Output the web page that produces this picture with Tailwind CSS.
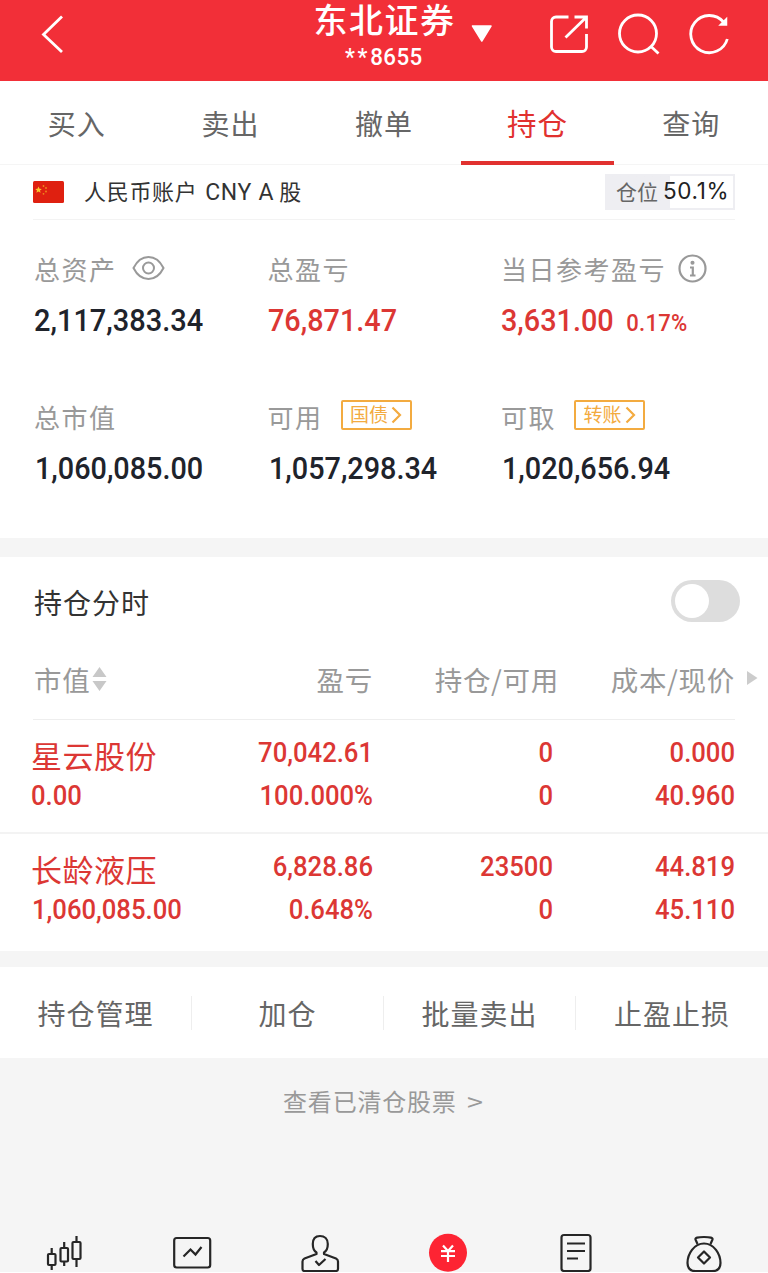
<!DOCTYPE html>
<html lang="zh-CN">
<head>
    <meta charset="UTF-8">
    <meta name="viewport" content="width=device-width, initial-scale=1.0">
    <title>东北证券 - 持仓</title>
    <script src="https://cdn.jsdelivr.net/npm/@tailwindcss/browser@4"></script>
</head>
<body class="bg-[#f5f5f5] font-['Noto_Sans_CJK_SC',sans-serif] whitespace-nowrap">
<div class="w-[768px] h-[1273px] flex flex-col overflow-hidden">

    <!-- 顶部栏 -->
    <header class="relative h-[81px] shrink-0 bg-[#f22f38] text-white">
        <div class="flex flex-col items-center">
            <h1 class="h-10 text-[34px] leading-[43px] font-['Roboto','Noto_Sans_CJK_SC',sans-serif] font-medium tracking-[1.5px] ml-[1px]">东北证券</h1>
            <p class="h-8 leading-[34px] text-[24px] font-['Roboto',sans-serif] font-medium tracking-[.4px] scale-x-[.93]"><span class="tracking-[3px]">**</span>8655</p>
        </div>
        <svg class="absolute inset-0" width="768" height="81" viewBox="0 0 768 81" fill="none" stroke="#fff" stroke-width="2.800">
            <path d="M62 16.500L43.500 34.500L62 52"/>
            <path d="M472.500 26H491L481.800 41Z" fill="#fff" stroke-width="1.500" stroke-linejoin="round"/>
            <path d="M568.500 17H556a4.500 4.500 0 0 0-4.500 4.500V47a4.500 4.500 0 0 0 4.500 4.500H582a4.500 4.500 0 0 0 4.500-4.500V34M574.500 17H586.500V28.500M586 17.500L565.500 37.500"/>
            <circle cx="638" cy="33.500" r="18.500"/>
            <path d="M651 46.500L658.500 53.500"/>
            <path d="M727.300 39A18.600 18.600 0 1 1 723.500 22"/>
            <path d="M726.500 18.500V25H720Z" fill="#fff" stroke-width="1.500"/>
        </svg>
    </header>

    <!-- 交易标签 -->
    <nav class="h-[84px] shrink-0 grid grid-cols-5 bg-white border-b border-[#f5f5f5] text-center text-[28px] leading-[84px] tracking-[1px] text-[#666]">
        <a>买入</a>
        <a>卖出</a>
        <a>撤单</a>
        <a class="h-[84px] border-b-4 border-[#e1312f] text-[#e1312f] text-[29.5px] leading-[82px]">持仓</a>
        <a>查询</a>
    </nav>

    <!-- 账户资产 -->
    <section class="h-[373px] shrink-0 bg-white px-[33px]">
        <div class="h-[55px] flex items-center border-b border-[#f3f3f3]">
            <svg width="31" height="22" viewBox="0 0 31 22">
                <rect width="31" height="22" rx="1.500" fill="#df2010"/>
                <path d="M5.500 5.500l1 2.200 2.300.2-1.800 1.600.6 2.300-2.100-1.200-2.100 1.200.6-2.300-1.800-1.600 2.300-.2z" fill="#fbc42d"/>
                <g fill="#ee8b1d"><circle cx="10.500" cy="5" r=".9"/><circle cx="13" cy="7" r=".9"/><circle cx="13" cy="10.500" r=".9"/><circle cx="10.500" cy="12.800" r=".9"/></g>
            </svg>
            <span class="ml-[20px] mt-[1px] text-[22px] tracking-[.7px] text-[#333]">人民币账户 <span class="ml-[2px] font-['Roboto',sans-serif] text-[23px]">CNY A</span><span class="ml-[5px]">股</span></span>
            <div class="ml-auto h-[36px] w-[130px] flex items-center border-2 border-[#eeeef2] bg-linear-to-r from-[#eeeef2] from-50% to-white to-50% pl-[9px] text-[21px] text-[#666]">
                仓位<span class="ml-[5px] mb-[2px] font-['Inter',sans-serif] text-[22.5px] tracking-[.6px] text-[#222]">50.1%</span>
            </div>
        </div>
        <div class="grid grid-cols-[233.5px_233.5px_1fr] pl-[1px] text-[#999] text-[26px] tracking-[1.5px]">
            <div class="h-[148px] pt-[28px]">
                <div class="h-10 flex items-center">总资产
                    <svg class="ml-[15px]" width="33" height="26" viewBox="0 0 33 26" fill="none" stroke="#999" stroke-width="2">
                        <path d="M1.500 13C5 6 10.500 2 16.500 2S28 6 31.500 13C28 20 22.500 24 16.500 24S5 20 1.500 13Z"/>
                        <circle cx="16.500" cy="13" r="5.500"/>
                    </svg>
                </div>
                <div class="mt-[12px] h-10 leading-10 font-['Roboto',sans-serif] font-medium text-[32px] tracking-normal text-[#20232b] origin-left scale-x-[.905]">2,117,383.34</div>
            </div>
            <div class="h-[148px] pt-[28px]">
                <div class="h-10 flex items-center">总盈亏</div>
                <div class="mt-[12px] h-10 leading-10 font-['Roboto',sans-serif] font-medium text-[32px] tracking-normal text-[#dc3734] origin-left scale-x-[.9]">76,871.47</div>
            </div>
            <div class="h-[148px] pt-[28px]">
                <div class="h-10 flex items-center">当日参考盈亏
                    <svg class="ml-[12px]" width="29" height="29" viewBox="0 0 29 29" fill="none" stroke="#999" stroke-width="2.200">
                        <circle cx="14.500" cy="14.500" r="13"/>
                        <circle cx="14.500" cy="8.800" r="1.300" fill="#999" stroke-width="1.500"/>
                        <path d="M12 13.500H14.800V21.500M12 21.500H17.500"/>
                    </svg>
                </div>
                <div class="mt-[12px] h-10 leading-10 font-['Roboto',sans-serif] font-medium text-[32px] tracking-normal text-[#dc3734] origin-left scale-x-[.9]">3,631.00<span class="ml-[14px] text-[24.500px] tracking-[.3px]">0.17%</span></div>
            </div>
            <div class="pt-[28px]">
                <div class="h-10 flex items-center">总市值</div>
                <div class="mt-[12px] ml-[1px] h-10 leading-10 font-['Roboto',sans-serif] font-medium text-[32px] tracking-normal text-[#20232b] origin-left scale-x-[.9]">1,060,085.00</div>
            </div>
            <div class="pt-[28px]">
                <div class="h-10 flex items-center">可用
                    <span class="ml-[18px] mb-[3px] h-[30px] w-[71px] flex items-center justify-center border-2 border-[#f3ab40] rounded-[2px] text-[19px] tracking-normal text-[#f3ab40]">国债<svg class="ml-[3px]" width="11" height="18" viewBox="0 0 11 18" fill="none" stroke="#f3ab40" stroke-width="2.200"><path d="M1.500 1.500L9 9L1.500 16.500"/></svg></span>
                </div>
                <div class="mt-[12px] ml-[1px] h-10 leading-10 font-['Roboto',sans-serif] font-medium text-[32px] tracking-normal text-[#20232b] origin-left scale-x-[.9]">1,057,298.34</div>
            </div>
            <div class="pt-[28px]">
                <div class="h-10 flex items-center">可取
                    <span class="ml-[18px] mb-[3px] h-[30px] w-[71px] flex items-center justify-center border-2 border-[#f3ab40] rounded-[2px] text-[19px] tracking-normal text-[#f3ab40]">转账<svg class="ml-[3px]" width="11" height="18" viewBox="0 0 11 18" fill="none" stroke="#f3ab40" stroke-width="2.200"><path d="M1.500 1.500L9 9L1.500 16.500"/></svg></span>
                </div>
                <div class="mt-[12px] ml-[1px] h-10 leading-10 font-['Roboto',sans-serif] font-medium text-[32px] tracking-normal text-[#20232b] origin-left scale-x-[.9]">1,020,656.94</div>
            </div>
        </div>
    </section>

    <!-- 持仓列表 -->
    <section class="mt-[19px] h-[394px] shrink-0 bg-white">
        <div class="h-[88px] pl-[34px] pr-[28px] flex items-center justify-between text-[28px] tracking-[1px] text-[#333]">
            <span class="mt-[2px]">持仓分时</span>
            <span class="h-[42px] w-[69px] rounded-full bg-[#ddd] p-[4px]"><span class="block size-[34px] rounded-full bg-white"></span></span>
        </div>
        <div class="h-[74px] grid grid-cols-[189px_151px_186px_176px_1fr] pl-[33px] text-[27.5px] leading-[68px] tracking-[.7px] text-[#999] text-right">
            <div class="flex items-center h-[68px] pl-[1px]">市值
                <svg class="ml-[2px]" width="15" height="24" viewBox="0 0 14 24" fill="#c8c8c8"><path d="M7 0L14 10H0ZM7 24L0 14H14Z"/></svg>
            </div>
            <div>盈亏</div>
            <div>持仓/可用</div>
            <div>成本/现价</div>
            <div class="flex items-center h-[66px] pl-[12px]"><svg width="11" height="14" viewBox="0 0 11 14" fill="#ccc"><path d="M0 0L10.500 7L0 14Z"/></svg></div>
        </div>
        <div class="mx-[33px] h-px bg-[#eee]"></div>
        <div class="h-[114px] grid grid-cols-[189px_151px_180px_182px] grid-rows-[43px_43px] pt-[11px] pl-[33px] border-b-2 border-[#f3f3f3] font-['Roboto',sans-serif] font-medium text-[28.5px] leading-[43px] text-[#dc3734] text-right">
            <div class="-ml-[2px] pt-[2px] text-left font-['Noto_Sans_CJK_SC',sans-serif] font-normal text-[31px] tracking-[.5px]">星云股份</div>
            <div class="origin-right scale-x-[.9]">70,042.61</div>
            <div class="origin-right scale-x-[.9]">0</div>
            <div class="origin-right scale-x-[.9]">0.000</div>
            <div class="-ml-[2px] text-left origin-left scale-x-[.9]">0.00</div>
            <div class="origin-right scale-x-[.9]">100.000%</div>
            <div class="origin-right scale-x-[.9]">0</div>
            <div class="origin-right scale-x-[.9]">40.960</div>
        </div>
        <div class="h-[117px] grid grid-cols-[189px_151px_180px_182px] grid-rows-[43px_43px] pt-[11px] pl-[33px] font-['Roboto',sans-serif] font-medium text-[28.5px] leading-[43px] text-[#dc3734] text-right">
            <div class="-ml-[2px] pt-[2px] text-left font-['Noto_Sans_CJK_SC',sans-serif] font-normal text-[31px] tracking-[.5px]">长龄液压</div>
            <div class="origin-right scale-x-[.9]">6,828.86</div>
            <div class="origin-right scale-x-[.9]">23500</div>
            <div class="origin-right scale-x-[.9]">44.819</div>
            <div class="-ml-[1px] text-left origin-left scale-x-[.9]">1,060,085.00</div>
            <div class="origin-right scale-x-[.9]">0.648%</div>
            <div class="origin-right scale-x-[.9]">0</div>
            <div class="origin-right scale-x-[.9]">45.110</div>
        </div>
    </section>

    <!-- 快捷操作 -->
    <section class="mt-[16px] h-[91px] shrink-0 grid grid-cols-4 items-center bg-white text-center text-[28px] leading-[34px] tracking-[1px] text-[#666]">
        <div class="border-r border-[#eee]">持仓管理</div>
        <div class="border-r border-[#eee]">加仓</div>
        <div class="border-r border-[#eee]">批量卖出</div>
        <div>止盈止损</div>
    </section>

    <div class="h-[86px] shrink-0 text-center text-[24px] leading-[86px] tracking-[.8px] text-[#999]">查看已清仓股票 <span class="ml-[4px] inline-block origin-left scale-x-[1.2] pr-[4px]">&gt;</span></div>

    <!-- 底部导航 -->
    <footer class="mt-auto h-[53px] shrink-0 grid grid-cols-6 justify-items-center border-b border-white">
        <svg width="60" height="52" viewBox="34 1220 60 52" fill="none" stroke="#262626" stroke-width="2.200">
            <rect x="48" y="1254" width="7.500" height="11" rx="1"/>
            <rect x="60.500" y="1248" width="7.500" height="13.500" rx="1"/>
            <rect x="72.500" y="1242" width="8" height="17" rx="1"/>
            <path d="M51.700 1248V1254M51.700 1265V1270M64.200 1242V1248M64.200 1261V1266M76.500 1236V1242M76.500 1259V1267"/>
        </svg>
        <svg width="60" height="52" viewBox="162 1220 60 52" fill="none" stroke="#262626" stroke-width="2.200">
            <rect x="174.200" y="1238" width="36" height="29.500" rx="2.500"/>
            <path d="M183.500 1256.500L190.500 1249.500L195.500 1254.500L201.500 1247"/>
        </svg>
        <svg width="60" height="52" viewBox="290 1220 60 52" fill="none" stroke="#262626" stroke-width="2.200" stroke-linejoin="round">
            <path d="M316.500 1254V1252.500C314 1251 312.800 1248 312.800 1244C312.800 1239 315.500 1236 320 1236S327.800 1239 327.800 1244C327.800 1248 326.500 1251 324 1252.500V1254L336 1258.500Q338 1259.500 338 1261.500V1269Q338 1271 336 1271H304.500Q302.500 1271 302.500 1269V1261.500Q302.500 1259.500 304.500 1258.500Z"/>
            <path d="M315.500 1261L319 1265L325.500 1259"/>
        </svg>
        <svg width="60" height="52" viewBox="418 1220 60 52" fill="none" stroke="#fff" stroke-width="2.200">
            <circle cx="448" cy="1252.700" r="19" fill="#fd2433" stroke="none"/>
            <path d="M443 1245.500L448 1251L453 1245.500M441 1251.200H455M441 1256H455M448 1251V1262"/>
        </svg>
        <svg width="60" height="52" viewBox="546 1220 60 52" fill="none" stroke="#262626" stroke-width="2.200">
            <rect x="561.500" y="1235" width="29" height="36" rx="2.500"/>
            <path d="M567 1243.500H585M567 1251H585M567 1258.500H578"/>
        </svg>
        <svg width="60" height="52" viewBox="674 1220 60 52" fill="none" stroke="#262626" stroke-width="2.200" stroke-linejoin="round">
            <path d="M697.500 1244L695.500 1239.500Q694.500 1237 704 1237T712.500 1239.500L710.500 1244"/>
            <path d="M704 1243.500C694 1243.500 687.500 1254 687.500 1263C687.500 1269 690.500 1271.200 696 1271.200H712C717.500 1271.200 720.500 1269 720.500 1263C720.500 1254 714 1243.500 704 1243.500Z"/>
            <path d="M704 1251.500L710 1257.500L704 1263.500L698 1257.500Z"/>
        </svg>
    </footer>
</div>
</body>
</html>
